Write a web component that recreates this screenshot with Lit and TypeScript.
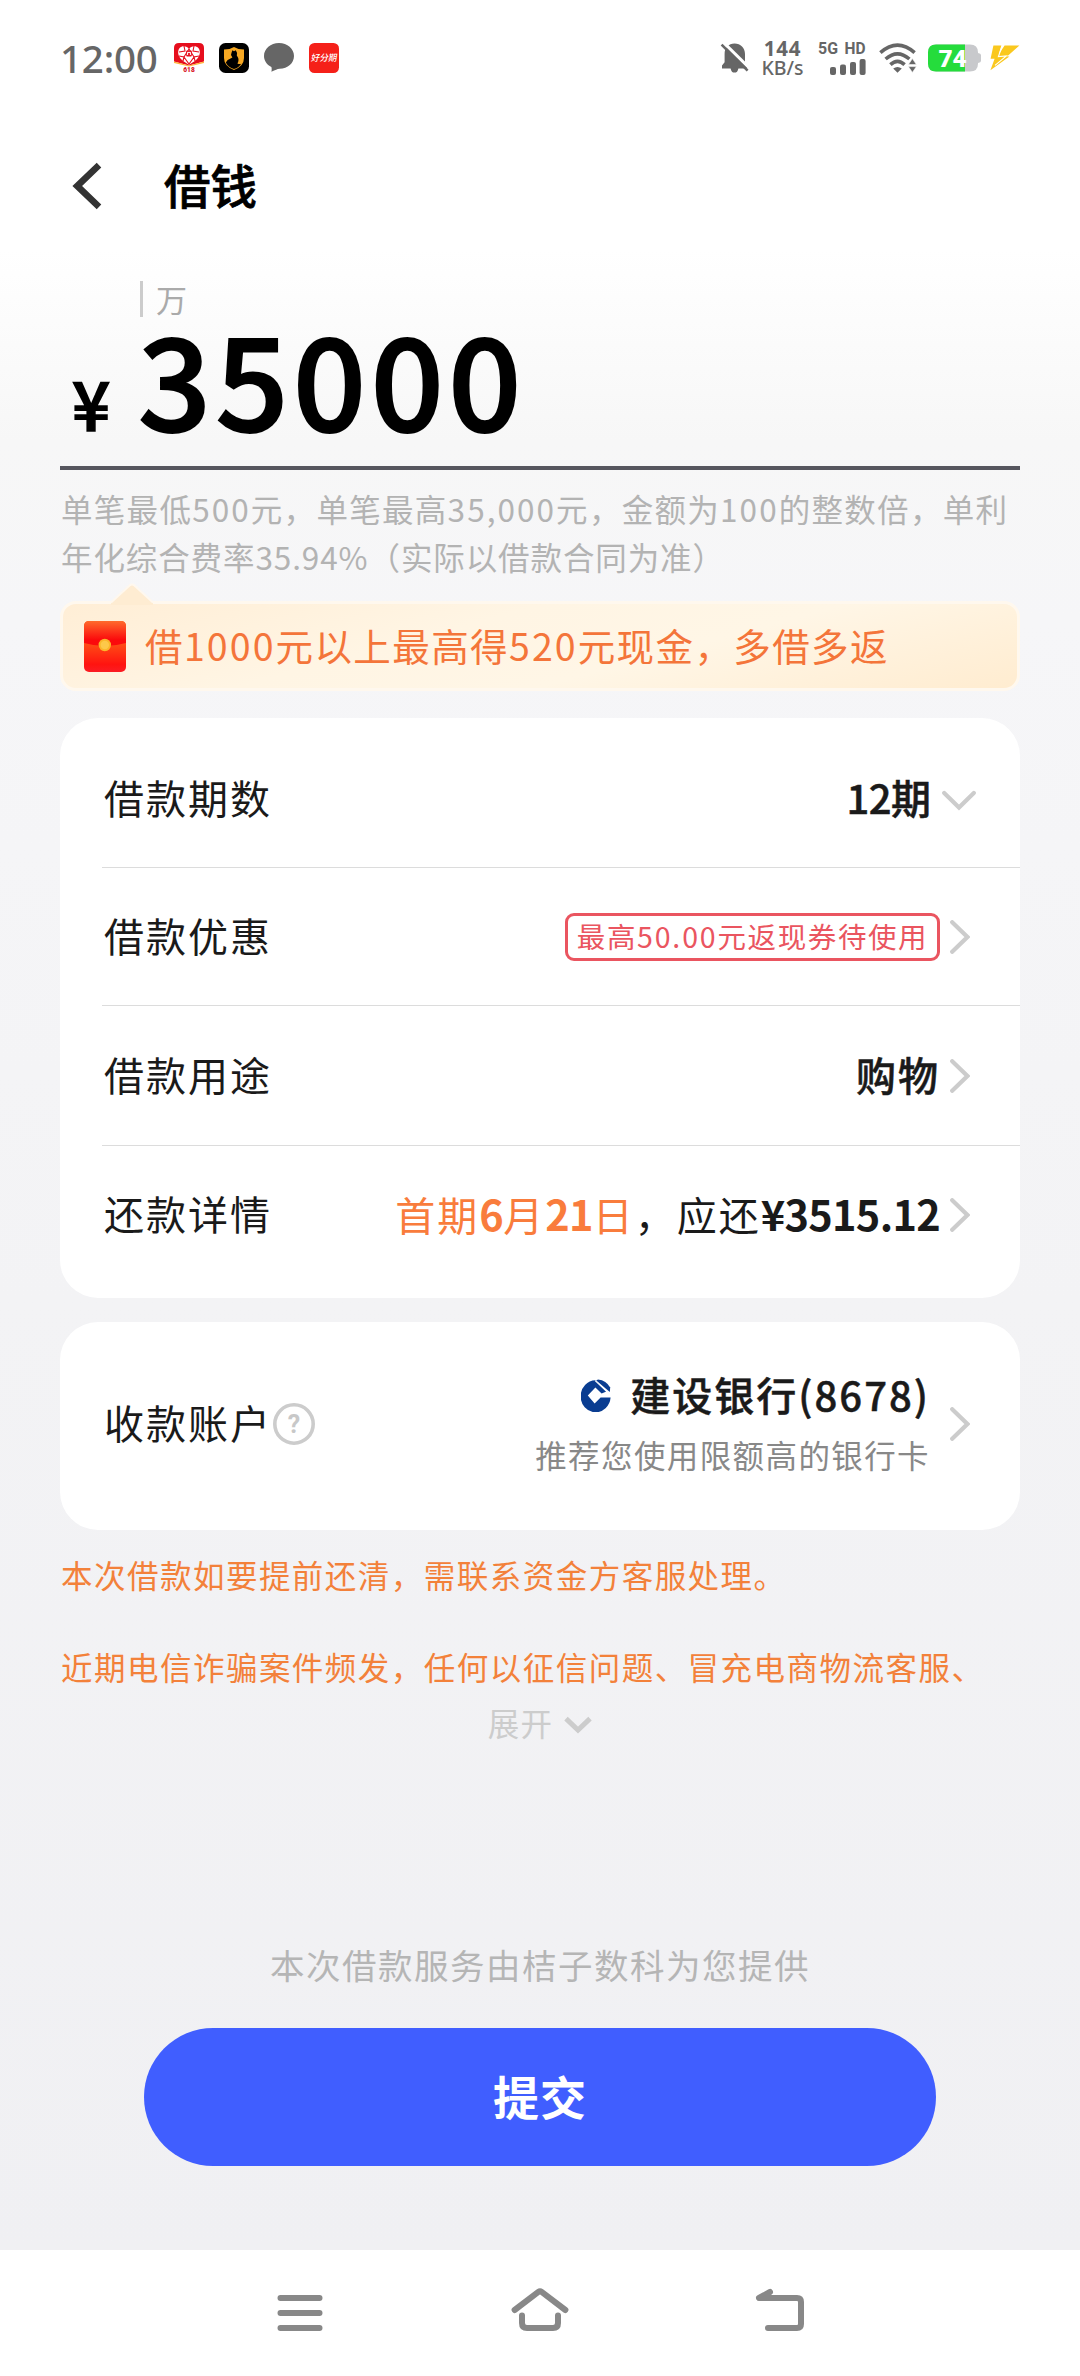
import { LitElement, html, css, svg, TemplateResult } from "lit";
import { customElement, property } from "lit/decorators.js";

/** Wraps every run of digits and Latin punctuation so that it can be tracked apart from the hanzi. */
const mixed = (text: string): TemplateResult[] =>
  text
    .split(/([0-9.,%]+)/)
    .filter((part) => part.length > 0)
    .map((part) => (/^[0-9.,%]/.test(part) ? html`<span class="num">${part}</span>` : html`${part}`));

const chevronRight = html`<svg class="chev" width="20" height="34" viewBox="0 0 20 34">
  <path d="M2.2 2.2 L17.4 17 L2.2 31.8" fill="none" stroke="#ccc" stroke-width="4.2" stroke-linecap="round" stroke-linejoin="miter" />
</svg>`;

@customElement("status-bar")
export class StatusBar extends LitElement {
  static styles = css`
    :host {
      display: flex;
      justify-content: space-between;
      align-items: center;
      box-sizing: border-box;
      height: 116px;
      padding: 0 60px;
      color: #666;
      font-family: "Noto Sans CJK SC", sans-serif;
    }
    .group {
      display: flex;
      align-items: center;
    }
    .time {
      width: 114px;
      font: 500 38.5px/40px "Noto Sans", "Noto Sans CJK SC", sans-serif;
      letter-spacing: -0.2px;
      white-space: nowrap;
    }
    .apps {
      display: flex;
      gap: 15px;
    }
    svg {
      display: block;
      overflow: visible;
    }
    .bell {
      margin-right: 11px;
    }
    .rate {
      display: flex;
      flex-direction: column;
      align-items: center;
      width: 45px;
      margin-right: 13px;
      white-space: nowrap;
    }
    .rate .top {
      font: 700 20.5px/19px "Noto Sans", sans-serif;
      letter-spacing: 0.8px;
    }
    .rate .bottom {
      font: 500 19.5px/20px "Noto Sans", sans-serif;
    }
    .cell {
      margin-right: 13px;
    }
    .wifi {
      margin-right: 11px;
    }
    .battery {
      margin-right: 9px;
    }
  `;

  render() {
    return html`
      <div class="group">
        <div class="time">12:00</div>
        <div class="apps">
          <svg width="30" height="30" viewBox="0 0 30 30">
            <path d="M5 0 H25 Q30 0 30 5 V18.6 L15 22.6 L0 18.6 V5 Q0 0 5 0Z" fill="#e60e1d" />
            <path d="M0 18.4 L15 22.4 L30 18.4 V20 L15 23.4 L0 20Z" fill="#ffb43a" />
            <path d="M15 6 C13 2.6 8 2.2 5.6 5 C3 8.4 4 13 7.5 16.5 C10 19 13 20.5 15 21.8 C17 20.5 20 19 22.5 16.5 C26 13 27 8.4 24.4 5 C22 2.2 17 2.6 15 6Z" fill="#fff" />
            <path d="M15 6 L10 14 L15 21 L20 14Z M10 3 L11 8 L5 9 M20 3 L19 8 L25 9 M5 13 L10 14 L9 18 M25 13 L20 14 L21 18" fill="none" stroke="#e60e1d" stroke-width="1.1" />
            <rect x="12.2" y="7.4" width="5.6" height="6" rx="1" fill="#e60e1d" />
            <path d="M13.6 12 V9.2 M16.4 12 V9.2 M13.6 9.4 H16.4" stroke="#fff" stroke-width="1" />
            <text x="15" y="29.2" text-anchor="middle" font-family="Roboto, sans-serif" font-weight="900" font-size="8" textLength="11.5" lengthAdjust="spacingAndGlyphs" fill="#d8101c">618</text>
          </svg>
          <svg width="30" height="30" viewBox="0 0 30 30">
            <rect width="30" height="30" rx="6.5" fill="#000" />
            <path d="M5 6.6 Q11 6.6 15 4 Q19 6.6 25 6.6 V15 Q25 23 15 27 Q5 23 5 15Z" fill="#f7a823" />
            <path d="M12.6 9.6 L13.4 7.2 L15 8.2 L16.8 7.2 Q18.8 10 17.8 12.4 Q20.8 16.4 18.4 20.4 Q21 21.6 22.4 20.4 Q20 24.4 15 26 Q9 24 6.8 19.4 Q9 16 13.4 14.4 L12 12Z" fill="#000" />
          </svg>
          <svg width="30" height="30" viewBox="0 0 30 30">
            <path d="M15 0 C23.4 0 30 5.8 30 13 C30 20.2 23.8 25.6 15.6 25.8 C13 26 11.6 27 7.4 28.8 C7.8 26.8 7.8 25.6 7.4 24 C2.6 21.6 0 17.6 0 13 C0 5.8 6.6 0 15 0Z" fill="#666" />
          </svg>
          <svg width="30" height="30" viewBox="0 0 30 30">
            <rect width="30" height="30" rx="5.5" fill="#f52019" />
            <text x="18" y="18.4" text-anchor="middle" transform="skewX(-10)" font-family="Noto Sans CJK SC, sans-serif" font-weight="500" font-size="9" textLength="26" lengthAdjust="spacingAndGlyphs" fill="#fff">好分期</text>
          </svg>
        </div>
      </div>
      <div class="group">
        <svg class="bell" width="28" height="32" viewBox="0 0 28 32">
          <path d="M13.5 1.6 C19.6 1.6 24 6 24 12 V20.2 L26.4 23.6 V26.4 H17.4 Q16.6 30.6 13.5 30.6 Q10.4 30.6 9.6 26.4 H1 V23.6 L3.6 20.2 V12 C3.6 6 7.6 1.6 13.5 1.6Z" fill="#666" />
          <path d="M2.4 0.4 L29 26.6" stroke="#fff" stroke-width="3" />
          <path d="M0.6 2.6 L26.6 28.6" stroke="#666" stroke-width="2.6" />
        </svg>
        <div class="rate"><span class="top">144</span><span class="bottom">KB/s</span></div>
        <svg class="cell" width="48" height="34" viewBox="0 0 48 34">
          <g font-family="Roboto, sans-serif" font-weight="700" font-size="16" fill="#666">
            <text x="0" y="12.6" textLength="20" lengthAdjust="spacingAndGlyphs">5G</text>
            <text x="26.6" y="12.6" textLength="21" lengthAdjust="spacingAndGlyphs">HD</text>
          </g>
          <g fill="#666">
            <rect x="12" y="26" width="6" height="8" rx="2" />
            <rect x="22" y="23.6" width="6" height="10.4" rx="2" />
            <rect x="32" y="21" width="6" height="13" rx="2" />
            <rect x="41.6" y="18" width="6" height="16" rx="2" />
          </g>
        </svg>
        <svg class="wifi" width="38" height="30" viewBox="0 0 38 30">
          <g fill="none" stroke="#666" stroke-width="3.6">
            <path d="M1.4 9.6 Q18.5 -5.4 35.6 9.6" />
            <path d="M6.6 16 Q18.5 5.6 30.4 16" />
            <path d="M11.4 21.6 Q18.5 15 25.6 21.6" />
          </g>
          <path d="M14.2 25.4 Q18.5 22.4 22.8 25.4 L18.5 29.8Z" fill="#666" />
          <path d="M33.4 15.6 L37.4 21.6 H29.4Z M33.4 29.4 L37.4 23.6 H29.4Z" fill="#666" stroke="#fff" stroke-width="0.6" />
        </svg>
        <svg class="battery" width="53" height="28" viewBox="0 0 53 28">
          <path d="M8 0.6 H42 Q50 0.6 50 8.6 V9 Q53 9.4 53 11 V17 Q53 18.6 50 19 V19.4 Q50 27.4 42 27.4 H8 Q0 27.4 0 19.4 V8.6 Q0 0.6 8 0.6Z" fill="#c8c9cc" />
          <path d="M37 0.6 H8 Q0 0.6 0 8.6 V19.4 Q0 27.4 8 27.4 H37Z" fill="#25dc3c" />
          <text x="24.6" y="22.6" text-anchor="middle" font-family="Roboto, sans-serif" font-weight="900" font-size="24.5" fill="#fff">74</text>
        </svg>
        <svg width="30" height="26" viewBox="0 0 30 26">
          <path d="M3.4 0.6 H11.4 L8.6 9.6 L14.6 0.6 H29.4 L17 11.4 H19.4 L0.4 25.2 L4.6 13.8 H0.6Z" fill="#fac81e" />
          <path d="M12.6 0 L8.4 11.6 L16.4 11 L5 20.4" fill="none" stroke="#fff" stroke-width="1.1" />
        </svg>
      </div>
    `;
  }
}

@customElement("loan-row")
export class LoanRow extends LitElement {
  @property() label = "";

  static styles = css`
    :host {
      display: flex;
      align-items: center;
      justify-content: space-between;
      box-sizing: border-box;
      padding-right: 50px;
    }
    .label {
      font-size: 40px;
      line-height: 56px;
      letter-spacing: 2px;
      white-space: nowrap;
      padding: 0 1px 3px 2px;
    }
    .side {
      display: flex;
      align-items: center;
    }
  `;

  render() {
    return html`
      <div class="side"><span class="label">${this.label}</span><slot name="hint"></slot></div>
      <div class="side"><slot></slot></div>
    `;
  }
}

@customElement("nav-bar")
export class NavBar extends LitElement {
  static styles = css`
    :host {
      display: grid;
      grid-template-columns: repeat(3, 240px);
      justify-content: center;
      justify-items: center;
      align-items: center;
      box-sizing: border-box;
      height: 126px;
      background: #fff;
    }
    svg {
      fill: none;
      stroke: #888;
      stroke-width: 6;
      stroke-linecap: round;
      stroke-linejoin: round;
    }
  `;

  render() {
    const icons = [
      svg`<path d="M10.5 15 H49.5 M10.5 30 H49.5 M10.5 45 H49.5" />`,
      svg`<path d="M4.6 27 L28.4 8.8 Q30 7.6 31.6 8.8 L55.4 27 M12 32.4 V40 Q12 45 17 45 H43 Q48 45 48 40 V32.4" />`,
      svg`<path d="M20 9 L9 15 H47 Q51 15 51 19 V41 Q51 45 47 45 H18" />`,
    ];
    return icons.map((icon) => html`<svg width="60" height="60" viewBox="0 0 60 60">${icon}</svg>`);
  }
}

@customElement("app-root")
export class AppRoot extends LitElement {
  static styles = css`
    :host {
      display: flex;
      flex-direction: column;
      box-sizing: border-box;
      width: 1080px;
      height: 2376px;
      overflow: hidden;
      background: linear-gradient(#fff 0, #fff 250px, #f7f7f7 440px, #f6f6f8 620px, #f3f3f5 1300px, #f0f0f3 2250px);
      color: #1a1a1a;
      font-family: "Noto Sans CJK SC", sans-serif;
    }
    svg {
      display: block;
      flex: none;
    }
    .header {
      display: flex;
      align-items: center;
      height: 140px;
      padding-left: 72px;
    }
    .title {
      margin: 0 0 4px 61px;
      color: #000;
      font-size: 46.5px;
      line-height: 60px;
      font-weight: 500;
      -webkit-text-stroke: 0.7px #000;
    }
    .body {
      display: flex;
      flex-direction: column;
      padding: 25px 60px 0;
    }
    .unit {
      display: flex;
      align-items: center;
      height: 36px;
      margin-left: 80px;
      padding-left: 13px;
      border-left: 3px solid #ccc;
      color: #aaa;
      font-size: 31px;
      line-height: 36px;
    }
    .amount {
      display: flex;
      align-items: baseline;
      height: 149px;
      border-bottom: 4px solid #56565e;
      color: #000;
      font-weight: 500;
      line-height: 118px;
    }
    .yen {
      width: 78px;
      font-size: 67px;
      text-indent: 12px;
      -webkit-text-stroke: 1.6px #000;
    }
    .figure {
      font-size: 128px;
      letter-spacing: 4.6px;
      -webkit-text-stroke: 2px #000;
    }
    .num {
      letter-spacing: 0.065em;
    }
    .helper {
      margin: 14px -20px 0 1px;
      color: #b3b3b3;
      font-size: 31.5px;
      line-height: 48px;
      letter-spacing: 1.3px;
      white-space: nowrap;
    }
    .helper .tight,
    .helper .tight .num {
      letter-spacing: 0.9px;
    }
    .promo {
      position: relative;
      display: flex;
      align-items: center;
      box-sizing: border-box;
      height: 90px;
      margin-top: 21px;
      padding-left: 21px;
      border: 3px solid #fff8ee;
      border-radius: 16px;
      background: linear-gradient(165deg, #ffeed6 0%, #fff5e4 38%, #fff6e6 62%, #ffecd0 100%);
    }
    .pointer {
      position: absolute;
      left: 47px;
      top: -21px;
    }
    .promo-text {
      margin-left: 19px;
      padding-bottom: 3px;
      font-size: 37.5px;
      line-height: 50px;
      letter-spacing: 1.4px;
      white-space: nowrap;
      color: #f4753a;
    }
    .promo-text .num {
      letter-spacing: 0.056em;
    }
    .card {
      display: flex;
      flex-direction: column;
      box-sizing: border-box;
      padding-left: 42px;
      border-radius: 38px;
      background: #fff;
    }
    .terms {
      height: 580px;
      margin-top: 27px;
    }
    .terms loan-row {
      height: 140px;
      border-bottom: 1px solid #dcdcdc;
    }
    .terms .r1 {
      height: 150px;
      padding-top: 11px;
      padding-right: 44px;
    }
    .terms .r2 {
      height: 138px;
    }
    .terms .r4 {
      height: 152px;
      border: 0;
      padding-bottom: 15px;
    }
    .chev {
      margin-left: 10px;
      margin-top: 1px;
    }
    .down {
      margin: 5px 0 0 9px;
    }
    .value {
      font-size: 40px;
      line-height: 56px;
      letter-spacing: 2px;
      padding-bottom: 3px;
      font-weight: 500;
      white-space: nowrap;
      -webkit-text-stroke: 0.5px currentColor;
    }
    .value .num {
      letter-spacing: -0.6px;
    }
    .bank-name .value {
      padding-bottom: 0;
    }
    .due {
      font-size: 40px;
      line-height: 56px;
      letter-spacing: 2px;
      padding-bottom: 2px;
      white-space: nowrap;
    }
    .strong {
      font-size: 41.5px;
      font-weight: 700;
      letter-spacing: -0.7px;
    }
    .date {
      color: #f97c3c;
    }
    .coupon {
      box-sizing: border-box;
      width: 375px;
      height: 48px;
      border: 3px solid #ea5560;
      border-radius: 9px;
      color: #ea5560;
      font-size: 28.5px;
      line-height: 39px;
      letter-spacing: 1.6px;
      text-align: center;
      white-space: nowrap;
    }
    .payee {
      height: 208px;
      margin-top: 24px;
    }
    .payee loan-row {
      height: 202px;
    }
    .payee .chev {
      margin-top: 2px;
    }
    .bank {
      display: flex;
      flex-direction: column;
      align-items: flex-end;
      margin-right: 10px;
      padding-bottom: 3px;
    }
    .bank-name {
      display: flex;
      align-items: center;
      gap: 19px;
    }
    .logo {
      margin-top: 4px;
    }
    .tip {
      color: #888;
      font-size: 31.5px;
      line-height: 48px;
      letter-spacing: 1.4px;
      white-space: nowrap;
      margin-top: 8px;
    }
    .help {
      margin-top: 2px;
    }
    .notice {
      margin: 0 -20px 44px 1px;
      color: #f3813a;
      font-size: 31.5px;
      line-height: 48px;
      letter-spacing: 1.48px;
      white-space: nowrap;
    }
    .first {
      margin-top: 20px;
    }
    .last {
      margin-bottom: 8px;
    }
    .more {
      display: flex;
      justify-content: center;
      align-items: center;
      gap: 11px;
      color: #ccc;
      font-size: 31.5px;
      line-height: 48px;
      letter-spacing: 1.3px;
    }
    .more svg {
      margin-top: 5px;
    }
    .footer {
      display: flex;
      flex-direction: column;
      align-items: center;
      margin-top: auto;
      padding-bottom: 84px;
    }
    .provider {
      color: #b5b5b5;
      font-size: 34.5px;
      line-height: 48px;
      letter-spacing: 1.5px;
    }
    .submit {
      width: 792px;
      height: 138px;
      margin-top: 40px;
      padding: 0 0 5px;
      border: 0;
      border-radius: 69px;
      background: #405eff;
      color: #fff;
      font: 700 46px/60px "Noto Sans CJK SC", sans-serif;
      letter-spacing: 1px;
    }
  `;

  render() {
    return html`
      <status-bar></status-bar>
      <div class="header">
        <svg width="31" height="48" viewBox="0 0 31 48">
          <path d="M27 3.2 L5.2 24 L27 44.8" fill="none" stroke="#333" stroke-width="6.6" stroke-linejoin="miter" />
        </svg>
        <h1 class="title">借钱</h1>
      </div>
      <main class="body">
        <div class="unit">万</div>
        <div class="amount"><span class="yen">¥</span><span class="figure">35000</span></div>
        <div class="helper">
          ${mixed("单笔最低500元，单笔最高35,000元，金额为100的整数倍，单利")}<br /><span class="tight">${mixed("年化综合费率35.94%（实际以借款合同为准）")}</span>
        </div>

        <div class="promo">
          <svg class="pointer" width="44" height="22" viewBox="0 0 44 22">
            <path d="M1 20 L19.6 2.6 Q22 0.6 24.4 2.6 L43 20 V22 H1Z" fill="#feecd2" />
            <path d="M1 19.4 L19.6 2.4 Q22 0.6 24.4 2.4 L43 19.4" fill="none" stroke="#fff8ee" stroke-width="2" />
          </svg>
          <svg width="42" height="51" viewBox="0 0 42 51">
            <defs>
              <linearGradient id="flap" x1="0" y1="0" x2="0" y2="1">
                <stop offset="0" stop-color="#ff6a2c" />
                <stop offset="0.75" stop-color="#fb0a0c" />
              </linearGradient>
              <linearGradient id="pouch" x1="0" y1="0" x2="0" y2="1">
                <stop offset="0.4" stop-color="#ff5216" />
                <stop offset="0.85" stop-color="#ff1410" />
                <stop offset="1" stop-color="#fb1c24" />
              </linearGradient>
            </defs>
            <rect width="42" height="51" rx="5" fill="url(#pouch)" />
            <path d="M5 0 H37 Q42 0 42 5 V22 Q21 28 0 22 V5 Q0 0 5 0Z" fill="url(#flap)" />
            <circle cx="20.8" cy="24" r="6.2" fill="#fbb62c" />
            <circle cx="20.8" cy="24" r="4.2" fill="#fdc84a" />
          </svg>
          <span class="promo-text">${mixed("借1000元以上最高得520元现金，多借多返")}</span>
        </div>

        <section class="card terms">
          <loan-row class="r1" label="借款期数">
            <span class="value">${mixed("12期")}</span>
            <svg class="down" width="34" height="22" viewBox="0 0 34 22">
              <path d="M2.2 3 L17 17.6 L31.8 3" fill="none" stroke="#ccc" stroke-width="4.2" stroke-linecap="round" />
            </svg>
          </loan-row>
          <loan-row class="r2" label="借款优惠">
            <span class="coupon">${mixed("最高50.00元返现券待使用")}</span>${chevronRight}
          </loan-row>
          <loan-row class="r3" label="借款用途"> <span class="value">购物</span>${chevronRight} </loan-row>
          <loan-row class="r4" label="还款详情">
            <span class="due"><span class="date">首期<span class="strong">6</span>月<span class="strong">21</span>日</span>，应还<span class="strong">¥3515.12</span></span>${chevronRight}
          </loan-row>
        </section>

        <section class="card payee">
          <loan-row label="收款账户">
            <svg class="help" slot="hint" width="42" height="42" viewBox="0 0 42 42">
              <circle cx="21" cy="21" r="19.2" fill="none" stroke="#ccc" stroke-width="3.6" />
              <text x="21" y="30" text-anchor="middle" font-family="Roboto, sans-serif" font-weight="700" font-size="25" fill="#c8c8c8">?</text>
            </svg>
            <div class="bank">
              <div class="bank-name">
                <svg class="logo" width="30" height="33" viewBox="0 0 30 33">
                  <path d="M14.4 1.3 A15 16 0 1 0 29.6 18.6 H19.6 L13.6 24.4 L6.8 16.6 L14.4 8.6 L20.6 14.6 L25.4 12.4Z" fill="#0a3d91" />
                  <path d="M17 0.5 Q25.4 1.4 29.2 8.6 L28.8 13 L15.2 1.6Z" fill="#0a3d91" />
                  <path d="M14.2 1.6 L26.6 13.2" stroke="#fff" stroke-width="1.2" />
                </svg>
                <span class="value">建设银行(8678)</span>
              </div>
              <div class="tip">推荐您使用限额高的银行卡</div>
            </div>
            ${chevronRight}
          </loan-row>
        </section>

        <div class="notice first">本次借款如要提前还清，需联系资金方客服处理。</div>
        <div class="notice last">近期电信诈骗案件频发，任何以征信问题、冒充电商物流客服、</div>
        <div class="more">
          <span>展开</span>
          <svg width="28" height="18" viewBox="0 0 28 18">
            <path d="M2 2.6 L14 14 L26 2.6" fill="none" stroke="#ccc" stroke-width="5" />
          </svg>
        </div>
      </main>
      <footer class="footer">
        <div class="provider">本次借款服务由桔子数科为您提供</div>
        <button class="submit">提交</button>
      </footer>
      <nav-bar></nav-bar>
    `;
  }
}
